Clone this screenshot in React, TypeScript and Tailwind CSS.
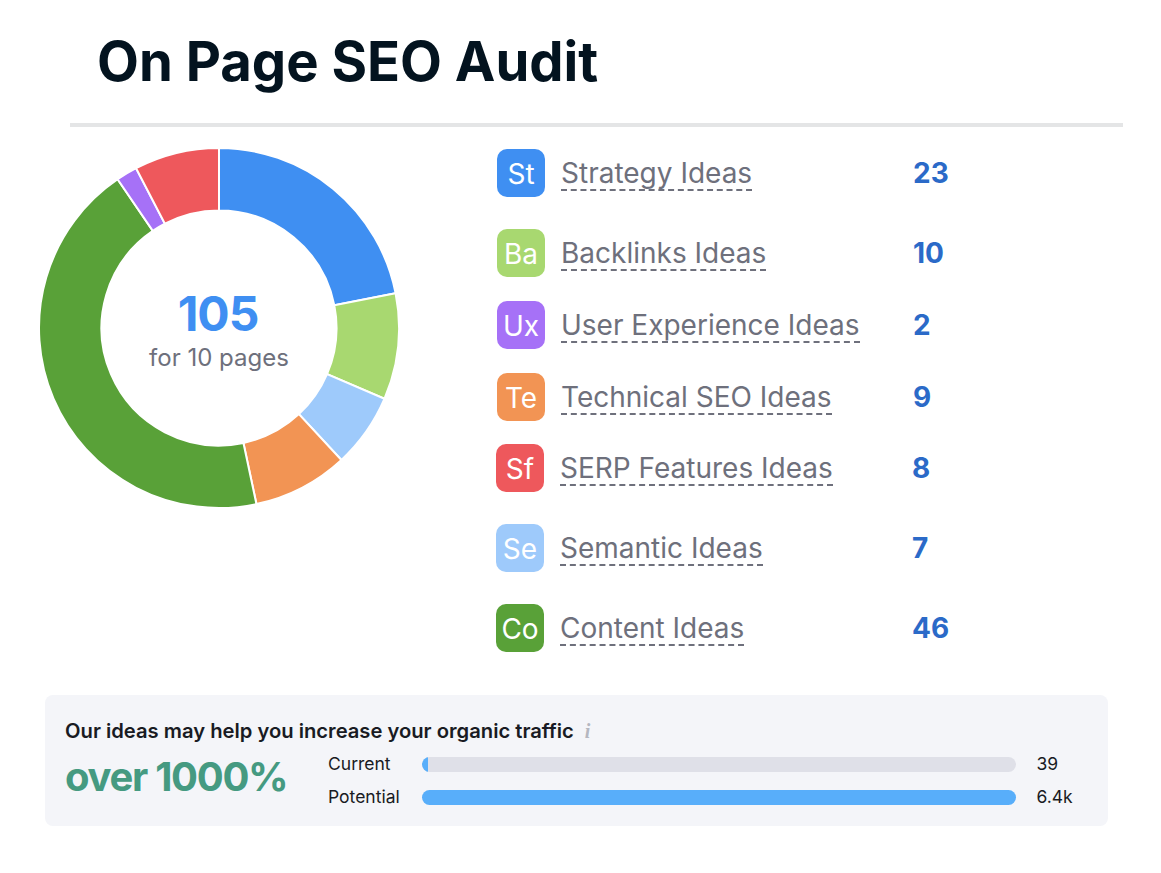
import React from 'react';

const segments = [
  { value: 23, color: '#3f8ff2' },
  { value: 10, color: '#a8d870' },
  { value: 7, color: '#9ecafb' },
  { value: 9, color: '#f29454' },
  { value: 46, color: '#59a138' },
  { value: 2, color: '#a671f7' },
  { value: 8, color: '#ee585c' },
];

const ideas = [
  { code: 'St', label: 'Strategy Ideas', count: 23, bg: 'bg-[#3f8ff2]', row: 'h-[48px] pl-[1px]' },
  { code: 'Ba', label: 'Backlinks Ideas', count: 10, bg: 'bg-[#a8d870]', row: 'h-[48px] mt-[32px] pl-[1px]' },
  { code: 'Ux', label: 'User Experience Ideas', count: 2, bg: 'bg-[#a671f7]', row: 'h-[48px] mt-[24px] pl-[1px]' },
  { code: 'Te', label: 'Technical SEO Ideas', count: 9, bg: 'bg-[#f29454]', row: 'h-[48px] mt-[24px] pl-[1px]' },
  { code: 'Sf', label: 'SERP Features Ideas', count: 8, bg: 'bg-[#ee585c]', row: 'h-[48px] mt-[23px]' },
  { code: 'Se', label: 'Semantic Ideas', count: 7, bg: 'bg-[#9ecafb]', row: 'h-[48px] mt-[32px]' },
  { code: 'Co', label: 'Content Ideas', count: 46, bg: 'bg-[#59a138]', row: 'h-[48px] mt-[32px]' },
];

function arc(startVal: number, endVal: number) {
  const total = 105;
  const c = 180;
  const R = 180;
  const r = 117.5;
  const a0 = (startVal / total) * Math.PI * 2 - Math.PI / 2;
  const a1 = (endVal / total) * Math.PI * 2 - Math.PI / 2;
  const large = a1 - a0 > Math.PI ? 1 : 0;
  const p = (rad: number, a: number) => `${c + rad * Math.cos(a)} ${c + rad * Math.sin(a)}`;
  return `M${p(R, a0)} A${R} ${R} 0 ${large} 1 ${p(R, a1)} L${p(r, a1)} A${r} ${r} 0 ${large} 0 ${p(r, a0)} Z`;
}

const Donut: React.FC = () => {
  let acc = 0;
  return (
    <div className="relative w-[360px] h-[360px] shrink-0">
      <svg width="360" height="360" viewBox="0 0 360 360">
        {segments.map((s, i) => {
          const d = arc(acc, acc + s.value);
          acc += s.value;
          return <path key={i} d={d} fill={s.color} stroke="#ffffff" strokeWidth="2" />;
        })}
      </svg>
      <div className="absolute inset-0 flex flex-col items-center justify-center">
        <div className="text-[48px] leading-[56px] font-bold text-[#3f8ff2] tracking-[-1px] mt-[4px] pr-[2px]">105</div>
        <div className="text-[24px] leading-[32px] text-[#6e707c]">for 10 pages</div>
      </div>
    </div>
  );
};

const App: React.FC = () => {
  return (
    <div className="w-[1161px] h-[873px] bg-white overflow-hidden font-['Inter',sans-serif]">
      <h1 className="pl-[97px] pt-[27px] text-[54.4px] leading-[68px] font-bold text-[#03131f]">On Page SEO Audit</h1>
      <div className="ml-[70px] w-[1053px] h-[4px] mt-[28px] bg-[#e4e5e6]" />

      <div className="flex mt-[21px] ml-[39px]">
        <Donut />
        <div className="ml-[97px] mt-[1px]">
          {ideas.map((idea) => (
            <div key={idea.code} className={`flex items-center ${idea.row}`}>
              <div className={`w-[48px] h-[48px] rounded-[10px] pt-[1px] flex items-center justify-center text-white text-[28px] ${idea.bg}`}>
                {idea.code}
              </div>
              <div className="w-[368px] pl-[16px] shrink-0">
                <span className="text-[28px] pt-[2px] leading-[31px] text-[#6e707c] inline-block border-b-2 border-dashed border-[#6e707c]">
                  {idea.label}
                </span>
              </div>
              <div className="text-[28px] font-bold text-[#2b6ac8]">{idea.count}</div>
            </div>
          ))}
        </div>
      </div>

      <div className="ml-[45px] mt-[43px] w-[1063px] h-[131px] rounded-[8px] bg-[#f4f5f9] pl-[20px] pt-[23px]">
        <div className="flex items-center h-[26px]">
          <span className="text-[20.2px] leading-[26px] font-semibold text-[#191b23]">Our ideas may help you increase your organic traffic</span>
          <span className="ml-[11px] text-[20px] leading-[26px] italic font-bold text-[#b5b7c0] font-['Liberation_Serif',serif]">i</span>
        </div>
        <div className="flex mt-[10.5px]">
          <div className="w-[263px] text-[40px] leading-[50px] font-bold text-[#459a81] tracking-[-1.3px] mt-[-2.5px]">over 1000%</div>
          <div className="flex flex-col gap-[13px]">
            <div className="flex items-center h-[20px]">
              <span className="w-[94px] text-[17.5px] text-[#191b23]">Current</span>
              <div className="w-[594px] h-[15px] rounded-full bg-[#dfe0e8] overflow-hidden">
                <div className="h-full w-[6px] bg-[#58aefa]" />
              </div>
              <span className="ml-[20.5px] text-[17.5px] text-[#191b23]">39</span>
            </div>
            <div className="flex items-center h-[20px]">
              <span className="w-[94px] text-[17.5px] text-[#191b23]">Potential</span>
              <div className="w-[594px] h-[15px] rounded-full bg-[#58aefa]" />
              <span className="ml-[20.5px] text-[17.5px] text-[#191b23]">6.4k</span>
            </div>
          </div>
        </div>
      </div>
    </div>
  );
};

export default App;
